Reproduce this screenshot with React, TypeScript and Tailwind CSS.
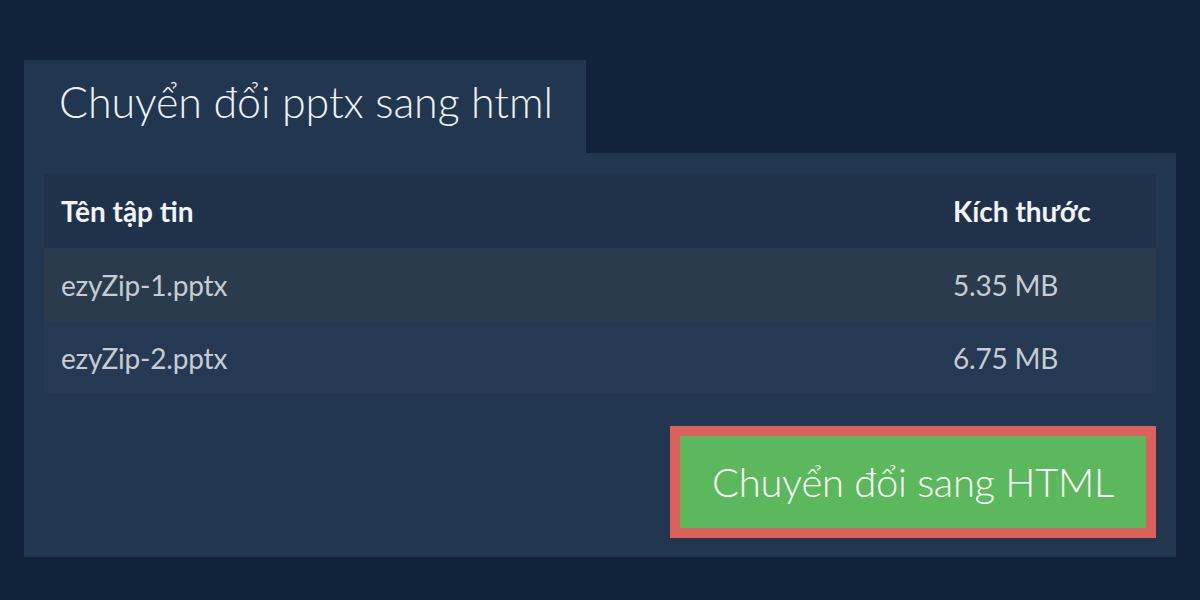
export default function App() {
  const rows = [
    { name: 'ezyZip-1.pptx', size: '5.35 MB', bg: 'bg-[#2a3b4d]' },
    { name: 'ezyZip-2.pptx', size: '6.75 MB', bg: 'bg-[#253a52]' },
  ]

  return (
    <div className="w-[1200px] h-[600px] bg-[#10233a] px-6 pt-[60px] font-['Lato','Liberation_Sans',sans-serif]">
      {/* Tab title */}
      <div className="w-[562px] h-[93px] bg-[#213750] pl-[35px] pt-[16px]">
        <h1 className="text-[43px] leading-[52px] font-light tracking-[-0.1px] text-[#eef1f5]">Chuyển đổi pptx sang html</h1>
      </div>

      {/* Panel */}
      <div className="bg-[#213750] px-5 pt-[21px] pb-[19px]">
        <div className="w-full">
          <div className="grid grid-cols-[1fr_220px] h-[74px] items-center bg-[#1f3249] text-[28px] font-bold text-[#f1f3f5]">
            <div className="px-[17px]">Tên tập tin</div>
            <div className="px-[17px]">Kích thước</div>
          </div>
          {rows.map((r, i) => (
            <div
              key={r.name}
              className={`grid grid-cols-[1fr_220px] items-center text-[28px] tracking-[-0.2px] text-[#c6ccd3] ${r.bg} ${i === 0 ? 'h-[74px]' : 'h-[71px]'}`}
            >
              <div className="px-[17px]">{r.name}</div>
              <div className="px-[17px]">{r.size}</div>
            </div>
          ))}
        </div>

        <div className="flex justify-end mt-[33px]">
          <button className="w-[486px] h-[112px] border-[10px] border-[#dc605c] bg-[#5cb85c] text-[40px] font-light tracking-[-0.3px] text-white">
            Chuyển đổi sang HTML
          </button>
        </div>
      </div>
    </div>
  )
}
